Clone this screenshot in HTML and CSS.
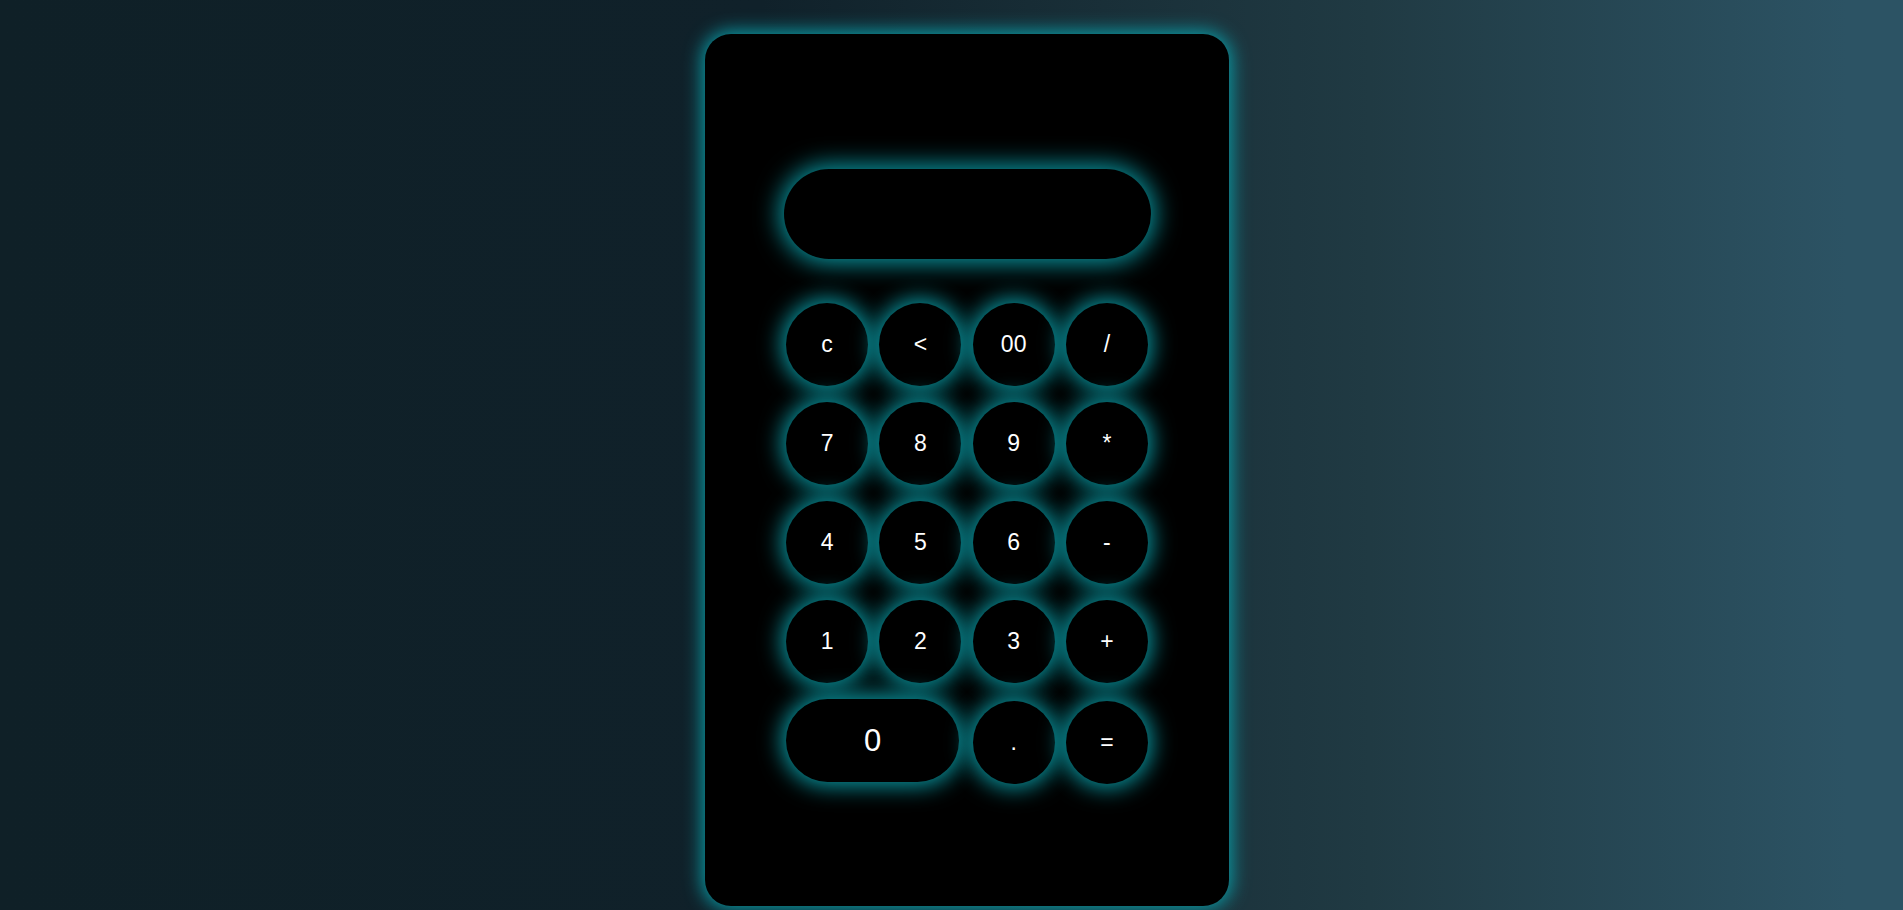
FILE: index.html
```html
<!DOCTYPE html>
<html lang="en">
<head>
<meta charset="utf-8">
<title>Calculator</title>
<link rel="stylesheet" href="styles.css">
</head>
<body>
<main class="page">
  <div class="calculator">
    <div class="display"></div>
    <div class="keys">
      <button class="key">c</button>
      <button class="key">&lt;</button>
      <button class="key">00</button>
      <button class="key">/</button>
      <button class="key">7</button>
      <button class="key">8</button>
      <button class="key">9</button>
      <button class="key">*</button>
      <button class="key">4</button>
      <button class="key">5</button>
      <button class="key">6</button>
      <button class="key">-</button>
      <button class="key">1</button>
      <button class="key">2</button>
      <button class="key">3</button>
      <button class="key">+</button>
      <button class="key key-wide">0</button>
      <button class="key key-low">.</button>
      <button class="key key-low">=</button>
    </div>
  </div>
</main>
</body>
</html>
```

FILE: styles.css
```css
html, body {
  margin: 0;
  padding: 0;
  height: 100%;
}

body {
  background: linear-gradient(to right, #0f2027 0%, #10212a 40%, #203a43 72%, #2c5364 97%, #2c5364 100%);
  font-family: "Liberation Sans", Arial, sans-serif;
  overflow: hidden;
}

.page {
  display: flex;
  justify-content: center;
  padding: 34px 0 0 31px;
}

.calculator {
  width: 524px;
  height: 872px;
  background: #000;
  border-radius: 26px;
  box-shadow: 0 0 18px 3px #0a9aa4;
  display: flex;
  flex-direction: column;
  align-items: center;
  padding-top: 135px;
  box-sizing: border-box;
}

.display {
  width: 367px;
  height: 90px;
  border-radius: 45px;
  background: #000;
  box-shadow: 0 0 24px 4px #0a9aa4;
}

.keys {
  margin-top: 44px;
  display: grid;
  grid-template-columns: repeat(4, 82px);
  grid-auto-rows: 83px;
  column-gap: 11.3px;
  row-gap: 16px;
}

.key {
  width: 82px;
  height: 83px;
  border: none;
  border-radius: 50%;
  background: #000;
  color: #fff;
  font-family: "Liberation Sans", Arial, sans-serif;
  font-size: 23px;
  padding: 0;
  display: flex;
  align-items: center;
  justify-content: center;
  box-shadow: 0 0 22px 4px #0a9aa4;
  cursor: pointer;
}

.key-wide {
  grid-column: span 2;
  width: 173px;
  border-radius: 42px;
  font-size: 31px;
}

.key-low {
  margin-top: 2px;
}
```
